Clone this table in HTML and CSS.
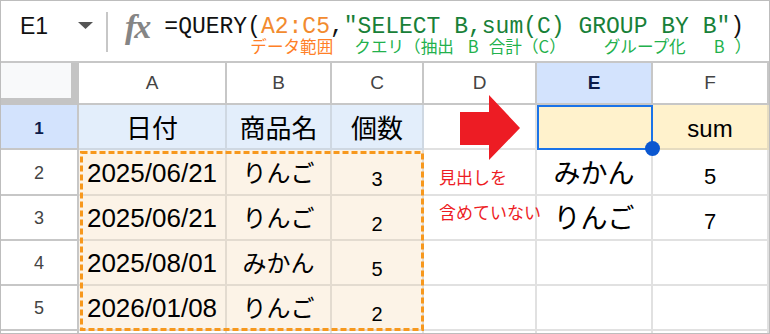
FILE: index.html
```html
<!DOCTYPE html>
<html lang="ja">
<head>
<meta charset="utf-8">
<title>QUERY</title>
<link rel="stylesheet" href="styles.css">
</head>
<body>
<div class="frame">
  <div class="fbar">
    <div class="namebox">
      <span class="ref">E1</span>
      <svg class="caret" width="15" height="7" viewBox="0 0 15 7"><polygon points="0,0 15,0 7.5,7" fill="#555"/></svg>
    </div>
    <div class="divider"></div>
    <div class="fx">fx</div>
    <div class="formula">
      <div class="fline"><span class="k">=QUERY(</span><span class="rng">A2:C5</span><span class="k">,</span><span class="str">"SELECT B,sum(C) GROUP BY B"</span><span class="k">)</span></div>
      <div class="notes"><span class="n-or n1">データ範囲</span><span class="n-gr n2">クエリ（抽出</span><span class="n-gr n3">B</span><span class="n-gr n4">合計（C）</span><span class="n-gr n5">グループ化</span><span class="n-gr n6">B</span><span class="n-gr n7">）</span></div>
    </div>
  </div>

  <div class="sheet">
    <div class="c corner"></div>
    <div class="c hdr">A</div>
    <div class="c hdr">B</div>
    <div class="c hdr">C</div>
    <div class="c hdr">D</div>
    <div class="c hdr on">E</div>
    <div class="c hdr">F</div>

    <div class="c rn on">1</div>
    <div class="c h1">日付</div>
    <div class="c h1">商品名</div>
    <div class="c h1">個数</div>
    <div class="c"></div>
    <div class="c sel"><span class="handle"></span></div>
    <div class="c yel sum">sum</div>

    <div class="c rn">2</div>
    <div class="c cr dt">2025/06/21</div>
    <div class="c cr kana">りんご</div>
    <div class="c cr num">3</div>
    <div class="c"></div>
    <div class="c ek">みかん</div>
    <div class="c fn">5</div>

    <div class="c rn">3</div>
    <div class="c cr dt">2025/06/21</div>
    <div class="c cr kana">りんご</div>
    <div class="c cr num">2</div>
    <div class="c"></div>
    <div class="c ek">りんご</div>
    <div class="c fn">7</div>

    <div class="c rn">4</div>
    <div class="c cr dt">2025/08/01</div>
    <div class="c cr kana">みかん</div>
    <div class="c cr num">5</div>
    <div class="c"></div>
    <div class="c"></div>
    <div class="c"></div>

    <div class="c rn">5</div>
    <div class="c cr dt">2026/01/08</div>
    <div class="c cr kana">りんご</div>
    <div class="c cr num">2</div>
    <div class="c"></div>
    <div class="c"></div>
    <div class="c"></div>

    <div class="c tail rnt"></div>
    <div class="c tail"></div>
    <div class="c tail"></div>
    <div class="c tail"></div>
    <div class="c tail"></div>
    <div class="c tail"></div>
    <div class="c tail"></div>
  </div>

  <svg class="marquee" width="344" height="180" viewBox="0 0 344 180"><rect x="1.5" y="1.5" width="341" height="177" fill="none" stroke="#f7981d" stroke-width="3" stroke-dasharray="6 3"/></svg>
  <svg class="arrow" width="61" height="66" viewBox="0 0 61 66"><polygon points="0,17 29,17 29,0 60,33 29,65 29,50 0,50" fill="#ed1c24"/></svg>
  <div class="remark">見出しを<br>含めていない</div>
</div>
</body>
</html>
```

FILE: styles.css
```css
* { box-sizing: border-box; }
body { margin: 0; background: #fff; }

.frame {
  position: relative;
  width: 770px;
  height: 334px;
  border: 1px solid #bdbdbd;
  overflow: hidden;
  font-family: "Liberation Sans", "Noto Sans CJK JP", sans-serif;
  color: #000;
}

/* formula bar */
.fbar {
  display: flex;
  align-items: flex-start;
  height: 62px;
  border-bottom: 2px solid #c7c7c7;
}
.namebox {
  width: 105px;
  display: flex;
  align-items: flex-start;
  padding-left: 19px;
}
.ref {
  font-size: 23px;
  line-height: 28px;
  margin-top: 11px;
  color: #111;
}
.caret { margin-top: 21px; margin-left: 30px; }
.divider {
  width: 2px;
  height: 40px;
  margin-top: 11px;
  background: #c7c7c7;
}
.fx {
  margin-left: 17px;
  margin-top: 6px;
  font-family: "Liberation Serif", serif;
  font-style: italic;
  font-weight: bold;
  font-size: 34px;
  line-height: 40px;
  letter-spacing: -2px;
  color: #858585;
}
.formula {
  margin-left: 15px;
  padding-top: 15px;
  display: flex;
  flex-direction: column;
}
.fline {
  font-family: "Liberation Mono", monospace;
  font-size: 23px;
  line-height: 22px;
  white-space: pre;
}
.k { color: #111; }
.rng { color: #f28b2f; }
.str { color: #188038; }
.notes {
  margin-top: 0;
  margin-left: 86px;
  display: flex;
  white-space: nowrap;
  font-family: "Noto Sans CJK JP", sans-serif;
  font-size: 16.6px;
  line-height: 17px;
}
.n-or { color: #ff7f27; }
.n-gr { color: #22b14c; }
.n2 { margin-left: 21px; }
.n3 { margin-left: 14px; }
.n4 { margin-left: 10px; }
.n5 { margin-left: 38px; }
.n6 { margin-left: 28px; }
.n7 { margin-left: 10px; }

/* sheet */
.sheet {
  display: grid;
  grid-template-columns: 78px 148px 105px 92px 113px 116px 116px;
  grid-template-rows: 42px 45px 46px 45px 45px 45px 2px;
}
.c {
  display: flex;
  align-items: center;
  justify-content: center;
  border-right: 2px solid #e1e1e1;
  border-bottom: 2px solid #e1e1e1;
  line-height: 1.2;
}
.corner {
  background: #f8f9fa;
  border-right: 8px solid #c4c4c4;
  border-bottom: 7px solid #c4c4c4;
}
.hdr {
  border-color: #c7c7c7;
  font-size: 19px;
  color: #444;
}
.hdr.on {
  background: #d3e3fd;
  font-weight: bold;
  color: #0b1b4a;
}
.rn {
  border-color: #c7c7c7;
  font-size: 18px;
  color: #444;
  padding-top: 3px;
}
.rn.on {
  background: #d3e3fd;
  font-weight: bold;
  font-size: 17px;
  color: #0b1b4a;
  padding-top: 5px;
}
.h1 {
  background: #e3eefb;
  border-color: #cfd8e2;
  font-family: "Noto Sans CJK JP", sans-serif;
  font-size: 26px;
}
.sel {
  position: relative;
  background: #fff2cc;
  outline: 2px solid #1a73e8;
  outline-offset: -2px;
}
.handle {
  position: absolute;
  right: -9px;
  bottom: -8px;
  width: 15px;
  height: 15px;
  border-radius: 50%;
  background: #0b57d0;
  z-index: 2;
}
.yel { background: #fff2cc; border-color: #e6dcc0; }
.sum { font-size: 24px; padding-top: 5px; }

.cr { background: #fcf3e7; border-color: #e3dbd0; }
.dt { font-size: 26px; padding-top: 3px; }
.kana { font-family: "Noto Sans CJK JP", sans-serif; font-size: 24px; }
.num { font-size: 20px; padding-top: 13px; }
.ek { font-family: "Noto Sans CJK JP", sans-serif; font-size: 27px; }
.fn { font-size: 22px; padding-top: 10px; }

.tail { border-bottom: none; }
.rnt { border-color: #c7c7c7; }

/* overlays */
.marquee { position: absolute; left: 79px; top: 150px; }
.arrow { position: absolute; left: 459px; top: 94px; }
.remark {
  position: absolute;
  left: 438px;
  top: 158px;
  font-family: "Noto Sans CJK JP", sans-serif;
  font-size: 17px;
  line-height: 35px;
  color: #ed1c24;
  white-space: nowrap;
}
```
